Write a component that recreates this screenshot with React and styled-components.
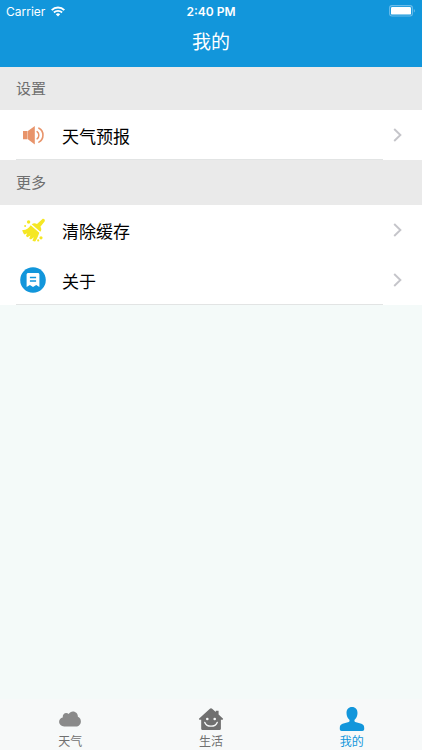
import React from "react";
import styled, { createGlobalStyle } from "styled-components";

const sections = [
	{
		title: "设置",
		rows: [{ label: "天气预报", icon: <SpeakerIcon />, last: true }],
	},
	{
		title: "更多",
		rows: [
			{ label: "清除缓存", icon: <BroomIcon /> },
			{ label: "关于", icon: <AboutIcon />, last: true },
		],
	},
];

const tabs = [
	{ label: "天气", icon: <CloudIcon /> },
	{ label: "生活", icon: <HouseIcon /> },
	{ label: "我的", icon: <PersonIcon />, active: true },
];

export default function App() {
	return (
		<Screen>
			<GlobalStyle />
			<Header>
				<StatusBar>
					<Carrier>
						Carrier
						<WifiIcon />
					</Carrier>
					<Clock>2:40 PM</Clock>
					<Battery>
						<BatteryIcon />
					</Battery>
				</StatusBar>
				<Title>我的</Title>
			</Header>

			<Main>
				{sections.map(section => (
					<Section key={section.title}>
						<SectionTitle>{section.title}</SectionTitle>
						<List>
							{section.rows.map(row => (
								<li key={row.label}>
									<Row type="button" $last={row.last}>
										<RowIcon>{row.icon}</RowIcon>
										<RowLabel>{row.label}</RowLabel>
										<ChevronIcon />
									</Row>
								</li>
							))}
						</List>
					</Section>
				))}
			</Main>

			<TabBar>
				{tabs.map(tab => (
					<Tab
						key={tab.label}
						type="button"
						$active={tab.active}
						aria-current={tab.active ? "page" : undefined}
					>
						{tab.icon}
						<span>{tab.label}</span>
					</Tab>
				))}
			</TabBar>
		</Screen>
	);
}

// ICONS
function WifiIcon() {
	return (
		<svg width="14" height="11" viewBox="0 0 14 11" fill="none" aria-hidden="true">
			<path d="M0.7 4.100a8.900 8.900 0 0 1 12.600 0" stroke="#fff" strokeWidth="2" />
			<path d="M2.900 6.500a5.800 5.800 0 0 1 8.200 0" stroke="#fff" strokeWidth="1.8" />
			<path d="M4.8 8.3a3.2 3.2 0 0 1 4.4 0L7 10.6z" fill="#fff" />
		</svg>
	);
}

function BatteryIcon() {
	return (
		<svg width="27" height="12" viewBox="0 0 27 12" fill="none" aria-hidden="true">
			<rect x="0.6" y="0.6" width="22.8" height="10.4" rx="2.4" stroke="#6bbcea" strokeWidth="1.1" />
			<rect x="2" y="2" width="20" height="7.6" rx="1.2" fill="#fff" />
			<path d="M24.8 4c1.5 0.5 1.5 3.1 0 3.6z" fill="#6bbcea" />
		</svg>
	);
}

function SpeakerIcon() {
	return (
		<svg width="26" height="26" viewBox="0 0 26 26" fill="none" aria-hidden="true">
			<path d="M3 9.1h4.5v8.2H3zM7.9 9.1L14.8 4v18.4l-6.9-5.1z" fill="#e8946b" />
			<path d="M17.1 9.6c2.3 1.6 2.3 5.6 0 7.2" stroke="#e8946b" strokeWidth="1.5" strokeLinecap="round" />
			<path d="M18.9 6.2c5.4 2.6 5.4 11.2 0 13.9" stroke="#e8946b" strokeWidth="1.6" strokeLinecap="round" />
		</svg>
	);
}

function BroomIcon() {
	return (
		<svg width="26" height="26" viewBox="0 0 26 26" fill="#f5e724" aria-hidden="true">
			<path d="M22.2 2.2c1.3-1.1 3.5 0.6 2.4 2.2l-4.2 5.3c1.2 1.8 1.2 3.5-0.1 5.1l-8.6-7.6c1.8-1.4 3.6-1.3 5.3-0.2z" />
			<path d="M10.7 8.2l8.6 7.6c-1.2 3-1.8 5.7-4.1 8.6-1-0.1-2-0.5-2.8-1l1.5-3.2-3 2.3-1.7-1.1 1.2-3-2.9 1.9-1.6-1.4 1.3-2.7-2.7 1.3c-1.1-1.2-1.9-2.6-2.2-4.6 3.4 0.4 6.4-1.4 8.4-4.7z" />
			<circle cx="8.6" cy="5" r="1.7" />
			<circle cx="5.1" cy="9" r="1" />
			<circle cx="21" cy="20.8" r="1.6" />
			<circle cx="18.2" cy="23.4" r="1.1" />
		</svg>
	);
}

function AboutIcon() {
	return (
		<svg width="26" height="26" viewBox="0 0 26 26" fill="none" aria-hidden="true">
			<circle cx="13" cy="13" r="12.8" fill="#1296db" />
			<path d="M8.4 5.9h9.4c1 0 1.6 0.6 1.6 1.6v12.4l-3.2-1.8-3.2 2-3.1-2-3.3 1.800V7.5c0-1 0.7-1.6 1.8-1.6z" fill="#fff" />
			<path d="M9.9 10.500h6.200M9.900 14h6.200" stroke="#1296db" strokeWidth="1.3" />
		</svg>
	);
}

function ChevronIcon() {
	return (
		<svg width="9" height="14" viewBox="0 0 9 14" fill="none" aria-hidden="true">
			<path d="M1.2 1l6.2 6-6.2 6" stroke="#c5c5ca" strokeWidth="1.9" />
		</svg>
	);
}

function CloudIcon() {
	return (
		<svg width="26" height="26" viewBox="0 0 26 26" fill="#8a8a8a" aria-hidden="true">
			<path d="M7.2 20.4C4.3 20.4 2.1 18.4 2.1 15.8c0-2.2 1.5-3.9 3.6-4.4-0.1-2.5 1.4-4.3 3.5-4.3 1 0 1.8 0.3 2.5 0.9 1-1.6 2.4-2.5 4.2-2.5 3 0 5.1 2.3 5 5.3 1.8 0.7 3 2.5 3 4.6 0 2.9-2.1 5-5 5z" />
		</svg>
	);
}

function HouseIcon() {
	return (
		<svg width="26" height="26" viewBox="0 0 26 26" fill="none" aria-hidden="true">
			<path d="M13 2.3c0.5 0 0.8 0.2 1.1 0.5l3.7 3.3V4.8h2.8v3.7l4.5 4.2-0.4 1.1h-1.8v9c0 0.7-0.4 1.1-1.1 1.1H4.3c-0.7 0-1.1-0.4-1.1-1.1v-9H1.3l-0.4-1.1 11-9.9c0.3-0.3 0.6-0.5 1.1-0.5z" fill="#707070" />
			<circle cx="9.3" cy="13" r="1.3" fill="#f7f9f9" />
			<circle cx="16.7" cy="13" r="1.3" fill="#f7f9f9" />
			<path d="M6.8 16.4c2 5 10.4 5 12.4 0" stroke="#f7f9f9" strokeWidth="1.4" strokeLinecap="round" />
		</svg>
	);
}

function PersonIcon() {
	return (
		<svg width="26" height="26" viewBox="0 0 26 26" fill="#1296db" aria-hidden="true">
			<path d="M13 1c3.5 0 5.5 2.5 5.5 6 0 2.9-1.2 5.4-2.9 6.7-0.5 1.4 0.1 2.1 1.5 2.6l5.3 1.5c2 0.7 2.8 2 2.8 4.1v1.1c0 1.2-0.7 1.9-1.9 1.9H2.7c-1.2 0-1.9-0.7-1.9-1.9v-1.1c0-2.1 0.8-3.4 2.8-4.1l5.3-1.5c1.4-0.5 2-1.2 1.5-2.6C8.7 12.4 7.5 9.9 7.5 7c0-3.5 2-6 5.5-6z" />
		</svg>
	);
}

// STYLES
const GlobalStyle = createGlobalStyle`
	* {
		box-sizing: border-box;
	}
	body {
		margin: 0;
		background: #f4faf9;
		font-family: Inter, "Liberation Sans", "Noto Sans CJK SC", sans-serif;
	}
	button {
		border: 0;
		padding: 0;
		background: none;
		font: inherit;
		cursor: pointer;
	}
	svg {
		display: block;
		flex: none;
	}
`;

const Screen = styled.div`
	display: flex;
	flex-direction: column;
	min-height: 100vh;
`;

const Header = styled.header`
	background: #1296db;
	color: #fff;
`;

const StatusBar = styled.div`
	display: grid;
	grid-template-columns: 1fr auto 1fr;
	align-items: center;
	height: 22px;
	padding: 0 6px;
	font-size: 12px;
`;

const Carrier = styled.span`
	display: flex;
	align-items: center;
	gap: 6px;
`;

const Clock = styled.span`
	font-weight: 600;
`;

const Battery = styled.span`
	justify-self: end;
`;

const Title = styled.h1`
	margin: 0;
	padding-bottom: 3px;
	font-size: 19px;
	font-weight: 400;
	line-height: 42px;
	text-align: center;
`;

const Main = styled.main`
	flex: 1;
`;

const SectionTitle = styled.h2`
	margin: 0;
	padding: 0 16px;
	background: #eaeaea;
	color: #6f6f6f;
	font-size: 15px;
	font-weight: 400;
	line-height: 43px;
`;

const Section = styled.section`
	& + & ${SectionTitle} {
		line-height: 45px;
	}
`;

const List = styled.ul`
	margin: 0;
	padding: 0;
	list-style: none;
	background: #fff;
`;

const Row = styled.button`
	display: flex;
	align-items: center;
	width: 100%;
	height: 50px;
	padding: 0 20px;
	color: #000;
	text-align: left;

	// hairline under the last row, inset on both sides
	background: ${props =>
		props.$last
			? "linear-gradient(#e2e4e4, #e2e4e4) 16px 100% / calc(100% - 55px) 1px no-repeat"
			: "none"};
`;

const RowIcon = styled.span`
	margin-right: 16px;
`;

const RowLabel = styled.span`
	flex: 1;
	font-size: 17px;
`;

const TabBar = styled.nav`
	display: flex;
	position: sticky;
	bottom: 0;
	height: 51px;
	background: #f7f9f9;
`;

const Tab = styled.button`
	flex: 1;
	display: flex;
	flex-direction: column;
	align-items: center;
	justify-content: flex-end;
	gap: 2px;
	color: ${props => (props.$active ? "#1296db" : "#707070")};

	span {
		font-size: 12px;
		line-height: 16px;
	}
`;
